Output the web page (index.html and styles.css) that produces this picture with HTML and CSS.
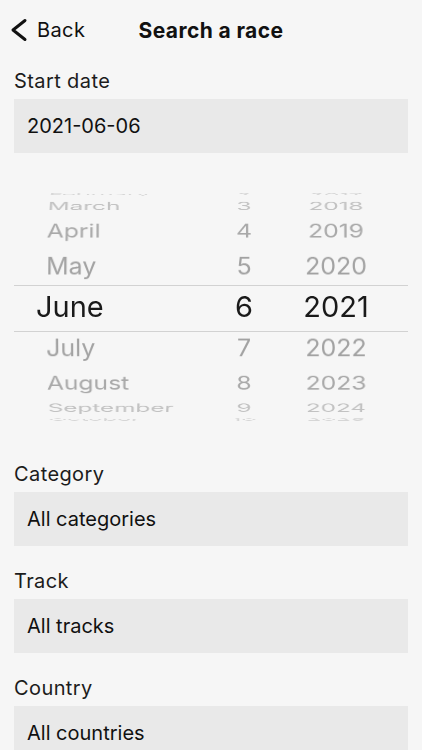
FILE: index.html
```html
<!DOCTYPE html>
<html lang="en">
<head>
    <meta charset="UTF-8">
    <meta name="viewport" content="width=device-width, initial-scale=1.0">
    <title>Search a race</title>
    <link rel="stylesheet" href="styles.css">
</head>
<body>
    <header class="nav">
        <a class="back">
            <svg width="18" height="26" viewBox="0 0 18 26">
                <path d="M15 3.5 L3 13 L15 22.5" fill="none" stroke="#111" stroke-width="3" stroke-linecap="round" stroke-linejoin="round"/>
            </svg>
            <span>Back</span>
        </a>
        <h1 class="title">Search a race</h1>
        <span></span>
    </header>

    <div class="form">
        <div class="field">
            <div class="label">Start date</div>
            <div class="box">2021-06-06</div>
        </div>

        <div class="picker">
            <div class="wheel month">
                <div class="item r-4">February</div>
                <div class="item r-3">March</div>
                <div class="item r-2">April</div>
                <div class="item r-1">May</div>
                <div class="item selected">June</div>
                <div class="item r1">July</div>
                <div class="item r2">August</div>
                <div class="item r3">September</div>
                <div class="item r4">October</div>
            </div>
            <div class="wheel day">
                <div class="item r-4">2</div>
                <div class="item r-3">3</div>
                <div class="item r-2">4</div>
                <div class="item r-1">5</div>
                <div class="item selected">6</div>
                <div class="item r1">7</div>
                <div class="item r2">8</div>
                <div class="item r3">9</div>
                <div class="item r4">10</div>
            </div>
            <div class="wheel year">
                <div class="item r-4">2017</div>
                <div class="item r-3">2018</div>
                <div class="item r-2">2019</div>
                <div class="item r-1">2020</div>
                <div class="item selected">2021</div>
                <div class="item r1">2022</div>
                <div class="item r2">2023</div>
                <div class="item r3">2024</div>
                <div class="item r4">2025</div>
            </div>
        </div>

        <div class="field">
            <div class="label">Category</div>
            <div class="box">All categories</div>
        </div>
        <div class="field">
            <div class="label">Track</div>
            <div class="box">All tracks</div>
        </div>
        <div class="field">
            <div class="label">Country</div>
            <div class="box">All countries</div>
        </div>
    </div>
</body>
</html>
```

FILE: styles.css
```css
body {
    font-family: Inter, "Liberation Sans", Arial, sans-serif;
    background-color: #f6f6f6;
    color: #111;
    margin: 0;
    padding: 0;
}
.nav {
    display: grid;
    grid-template-columns: 1fr auto 1fr;
    align-items: center;
    height: 60px;
    padding: 0 10px;
}
.back {
    display: flex;
    align-items: center;
    gap: 9px;
    font-size: 20px;
    letter-spacing: 0.4px;
    cursor: pointer;
}
.back svg {
    display: block;
}
.title {
    margin: 0;
    font-size: 21px;
    font-weight: 700;
    letter-spacing: 0.4px;
}
.form {
    padding: 9px 14px 0;
}
.field {
    margin-bottom: 23px;
}
.label {
    font-size: 20px;
    line-height: 24px;
    letter-spacing: 0.4px;
    margin-bottom: 6px;
    color: #1c1c1c;
}
.box {
    height: 54px;
    display: flex;
    align-items: center;
    padding: 0 13px;
    background-color: #e9e9e9;
    font-size: 20px;
}

/* date wheel */
.picker {
    position: relative;
    display: grid;
    grid-template-columns: 186px 88px 96px 1fr;
    height: 238px;
    margin: 35px 0 35.5px;
    overflow: hidden;
}
.picker::before,
.picker::after {
    content: "";
    position: absolute;
    left: 0;
    right: 0;
    height: 1px;
    background-color: #d2d2d2;
}
.picker::before {
    top: 97px;
}
.picker::after {
    top: 143px;
}
.wheel {
    display: grid;
    align-items: center;
    perspective: 2000px;
}
.item {
    grid-area: 1 / 1;
    line-height: 42px;
    font-size: 25px;
    backface-visibility: hidden;
}
.month .item {
    padding-left: 32px;
}
.day .item,
.year .item {
    text-align: center;
}
.item.selected {
    font-size: 29px;
    color: #1a1a1a;
}
.month .item.selected {
    padding-left: 22px;
}
.r-4 { transform: translateZ(-120px) rotateX(80deg) translateZ(120px); color: #d6d6d6; }
.r-3 { transform: translateZ(-120px) rotateX(60deg) translateZ(120px); color: #c2c2c2; }
.r-2 { transform: translateZ(-120px) rotateX(40deg) translateZ(120px); color: #a9a9a9; }
.r-1 { transform: translateZ(-120px) rotateX(20deg) translateZ(120px); color: #a2a2a2; }
.r1 { transform: translateZ(-120px) rotateX(-20deg) translateZ(120px); color: #a2a2a2; }
.r2 { transform: translateZ(-120px) rotateX(-40deg) translateZ(120px); color: #a9a9a9; }
.r3 { transform: translateZ(-120px) rotateX(-60deg) translateZ(120px); color: #c2c2c2; }
.r4 { transform: translateZ(-120px) rotateX(-80deg) translateZ(120px); color: #d6d6d6; }
```
